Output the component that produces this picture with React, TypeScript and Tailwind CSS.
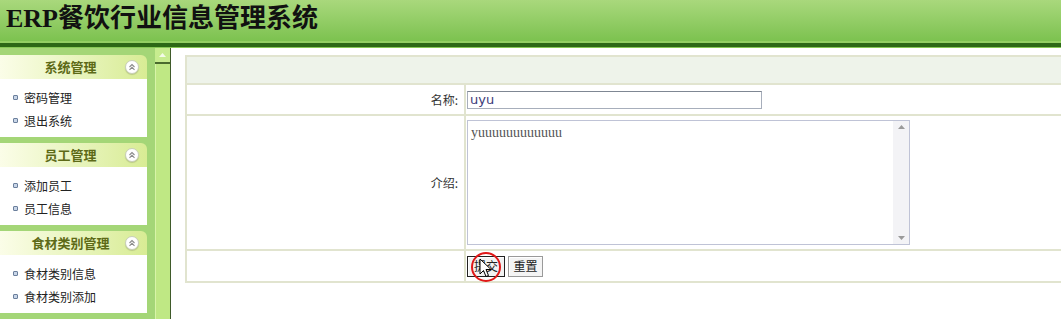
import React from "react";

const MENUS = [
  { title: "系统管理", items: ["密码管理", "退出系统"] },
  { title: "员工管理", items: ["添加员工", "员工信息"] },
  { title: "食材类别管理", items: ["食材类别信息", "食材类别添加"] },
];

function CollapseIcon() {
  return (
    <span className="flex h-[14px] w-[14px] items-center justify-center rounded-full border border-[#c9cfb8] bg-white shadow-[0_1px_1px_rgba(0,0,0,0.15)]">
      <svg width="8" height="8" viewBox="0 0 8 8">
        <path d="M1.5 4 L4 1.5 L6.5 4 M1.5 6.8 L4 4.3 L6.5 6.8" fill="none" stroke="#8a8a8a" strokeWidth="1.1" />
      </svg>
    </span>
  );
}

function MenuPanel({ title, items }: { title: string; items: string[] }) {
  return (
    <div className="w-[147px]">
      {/* Header */}
      <div className="flex h-6 items-center rounded-tr-md bg-gradient-to-r from-[#fbfde8] to-[#d8ec94] pr-2">
        <span className="flex-1 pl-4 text-center text-[13px] font-bold text-[#5d6a17]">
          {title}
        </span>
        <CollapseIcon />
      </div>
      {/* Items */}
      <div className="h-[58px] bg-white pt-[7px]">
        {items.map((it) => (
          <div key={it} className="flex h-[23px] items-center pl-[13px] text-[12px] text-[#222]">
            <span className="mr-[6px] h-[5px] w-[5px] rounded-[1px] border border-[#6b7f9c] bg-[#c9d6e8]" />
            {it}
          </div>
        ))}
      </div>
    </div>
  );
}

export default function App() {
  return (
    <div
      className="h-[319px] w-[1061px] overflow-hidden bg-white"
      style={{ fontFamily: '"Noto Sans CJK SC", "Liberation Sans", sans-serif' }}
    >
      {/* Header */}
      <div className="flex h-[41px] items-center bg-gradient-to-b from-[#a9d87c] to-[#7cc24f] pb-[3px] pl-[6px]">
        <h1
          className="text-[26px] leading-none font-bold text-[#111]"
          style={{ fontFamily: '"Liberation Serif", "Noto Sans CJK SC", serif' }}
        >
          ERP餐饮行业信息管理系统
        </h1>
      </div>
      <div className="h-[2px] bg-[#92cf62]" />
      <div className="h-[4px] bg-[#2c6816]" />
      <div className="h-[1px] bg-[#86c955]" />

      <div className="flex">
        {/* Sidebar */}
        <div className="flex h-[272px] w-[155px] flex-col gap-[6px] bg-[#a4d677] pt-[7px]">
          {MENUS.map((m) => (
            <MenuPanel key={m.title} title={m.title} items={m.items} />
          ))}
        </div>

        {/* Sidebar scrollbar */}
        <div className="flex h-[272px] w-[16px] flex-col border-r border-[#3f5a2a] bg-[#bfe884]">
          <div className="flex h-[16px] items-center justify-center border-b-2 border-[#4a6b2e] bg-[#c7ec8f]">
            <svg width="7" height="4" viewBox="0 0 7 4">
              <path d="M0 4 L3.5 0 L7 4 Z" fill="#f4fbe8" />
            </svg>
          </div>
          <div className="flex-1 border-l border-[#d8f4a8]" />
        </div>

        {/* Content */}
        <div className="relative flex-1 overflow-hidden pt-[7px] pl-[14px]">
          <table
            className="w-[900px] border-collapse text-[12px] text-[#333]"
            style={{ fontFamily: '"Noto Sans CJK SC", "Liberation Sans", sans-serif' }}
          >
            <tbody>
              <tr className="h-[28px] bg-[#eef3ea]">
                <td colSpan={2} className="border-2 border-[#e1e4cf]" />
              </tr>
              <tr className="h-[31px]">
                <td className="w-[279px] border-2 border-[#e1e4cf] pr-[6px] text-right">名称:</td>
                <td className="border-2 border-[#e1e4cf] pl-[1px]">
                  <input
                    readOnly
                    value="uyu"
                    className="block h-[18px] w-[295px] border border-[#a7aebb] border-t-[#7f8793] px-[2px] text-[13px] text-[#3b3b7a] outline-none"
                    style={{ fontFamily: '"DejaVu Sans", sans-serif' }}
                  />
                </td>
              </tr>
              <tr className="h-[135px]">
                <td className="border-2 border-[#e1e4cf] pr-[6px] text-right">介绍:</td>
                <td className="border-2 border-[#e1e4cf] pl-[1px]">
                  <div className="flex h-[125px] w-[443px] border border-[#bfc3d6]">
                    <div
                      className="flex-1 px-[3px] pt-[1px] text-[14px] text-[#555]"
                      style={{ fontFamily: '"Liberation Serif", serif' }}
                    >
                      yuuuuuuuuuuuu
                    </div>
                    <div className="flex w-[16px] flex-col items-center justify-between bg-[#f3f3f6] py-[4px]">
                      <svg width="7" height="4" viewBox="0 0 7 4">
                        <path d="M0 4 L3.5 0 L7 4 Z" fill="#9a9a9a" />
                      </svg>
                      <svg width="7" height="4" viewBox="0 0 7 4">
                        <path d="M0 0 L3.5 4 L7 0 Z" fill="#9a9a9a" />
                      </svg>
                    </div>
                  </div>
                </td>
              </tr>
              <tr className="h-[32px]">
                <td className="border-2 border-[#e1e4cf]" />
                <td className="border-2 border-[#e1e4cf] pl-[1px]">
                  <div className="relative flex gap-[3px]">
                    <button className="h-[21px] w-[38px] border border-[#222] bg-[#f2f2f2] text-[12px] text-[#222] shadow-[inset_1px_1px_0_#fff]">
                      提交
                    </button>
                    <button className="h-[21px] w-[35px] border border-[#9a9a9a] bg-[#f4f4f4] text-[12px] text-[#222] shadow-[inset_1px_1px_0_#fff]">
                      重置
                    </button>
                    {/* click highlight + cursor */}
                    <div className="absolute top-[-4px] left-[4px] h-[30px] w-[30px] rounded-full border-2 border-[#e01818]" />
                    <svg className="absolute top-[2px] left-[12px]" width="14" height="20" viewBox="0 0 14 20">
                      <path d="M1 1 L1 16 L4.5 12.5 L7 18.5 L9.5 17.5 L7 11.5 L12 11.5 Z" fill="#fff" stroke="#000" strokeWidth="1" />
                    </svg>
                  </div>
                </td>
              </tr>
            </tbody>
          </table>
        </div>
      </div>
    </div>
  );
}
